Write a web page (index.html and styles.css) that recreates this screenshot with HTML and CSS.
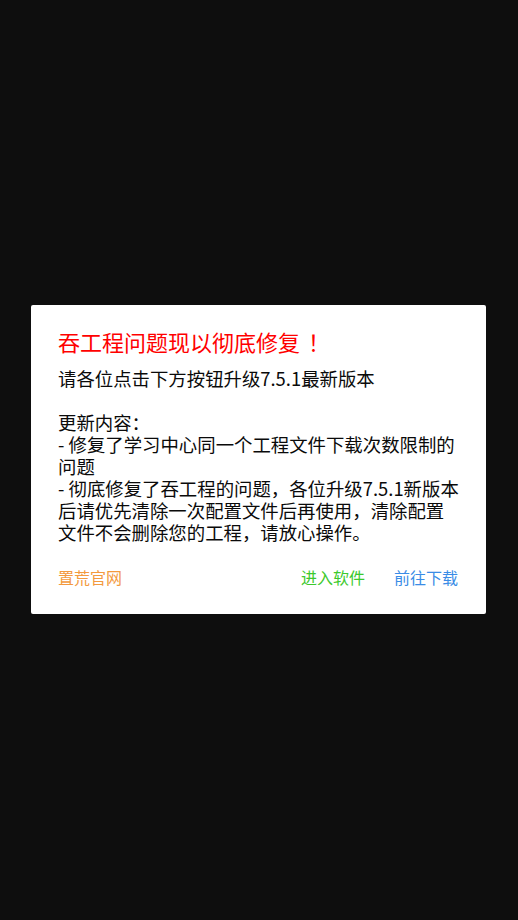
FILE: index.html
```html
<!DOCTYPE html>
<html lang="zh-CN">
<head>
<meta charset="utf-8">
<title>更新提示</title>
<link rel="stylesheet" href="styles.css">
</head>
<body>
<div class="screen">
  <div class="dialog">
    <h1 class="title">吞工程问题现以彻底修复<span class="bang">！</span></h1>
    <div class="message">
      <p>请各位点击下方按钮升级7.5.1最新版本</p>
      <p class="gap">更新内容：</p>
      <p>- 修复了学习中心同一个工程文件下载次数限制的问题</p>
      <p>- 彻底修复了吞工程的问题，各位升级7.5.1新版本后请优先清除一次配置文件后再使用，清除配置文件不会删除您的工程，请放心操作。</p>
    </div>
    <div class="actions">
      <span class="btn btn-site">置荒官网</span>
      <span class="spacer"></span>
      <span class="btn btn-enter">进入软件</span>
      <span class="btn btn-download">前往下载</span>
    </div>
  </div>
</div>
</body>
</html>
```

FILE: styles.css
```css
html, body {
  margin: 0;
  padding: 0;
  background: #0e0e0e;
}
body {
  font-family: "Noto Sans CJK SC", "Noto Sans", sans-serif;
  text-spacing-trim: space-all;
}
.screen {
  width: 518px;
  height: 920px;
  display: flex;
  align-items: flex-start;
  justify-content: flex-start;
  padding: 305px 0 0 31px;
  box-sizing: border-box;
}
.dialog {
  width: 455px;
  box-sizing: border-box;
  background: #ffffff;
  border-radius: 2px;
  padding: 21px 24px 25px 27px;
}
.title {
  margin: 0 0 11px 0;
  font-size: 22px;
  line-height: 30px;
  font-weight: normal;
  color: #ff0000;
}
.bang {
  margin-left: 8px;
}
.message {
  color: #0a0a0a;
  font-size: 18.4px;
  line-height: 22px;
}
.message p {
  margin: 0;
}
.message .gap {
  margin-top: 22px;
}
.actions {
  display: flex;
  align-items: center;
  margin-top: 22px;
  padding-right: 4px;
  gap: 29px;
  font-size: 16px;
  line-height: 24px;
}
.spacer {
  flex: 1;
}
.btn-site {
  color: #f39a3e;
}
.btn-enter {
  color: #3cc92c;
}
.btn-download {
  color: #3a8ce6;
}
```
